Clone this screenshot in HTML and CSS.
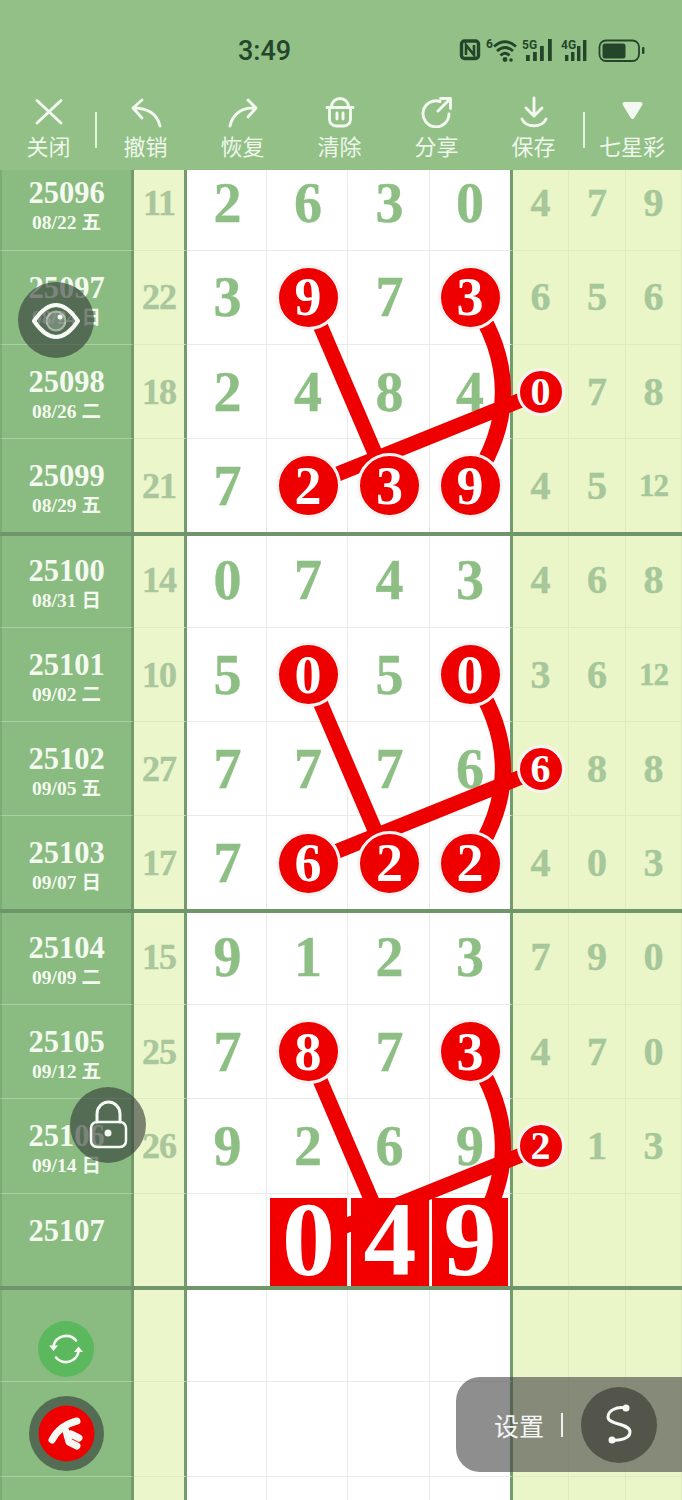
FILE: index.html
```html
<!DOCTYPE html>
<html lang="zh">
<head>
<meta charset="utf-8">
<title>七星彩</title>
<link rel="stylesheet" href="styles.css">
</head>
<body>
<div class="page">
  <header class="header">
    <div class="status">
      <span class="time">3:49</span>
      <svg class="status-icons" width="190" height="30" viewBox="0 0 190 30">
        <g class="ink-line">
          <rect x="3.5" y="6" width="17" height="17.5" rx="3" stroke-width="3.400"/>
          <path d="M8 20V10L16 20V10" stroke-width="2.600"/>
          <path d="M36 11.5Q47 2 58 11.5" stroke-width="2.800"/>
          <path d="M39 16Q47 9 55 16" stroke-width="2.800"/>
          <path d="M42.5 20.5Q47 16 51.5 20.5" stroke-width="2.800"/>
        </g>
        <g class="ink-fill">
          <circle cx="47" cy="24.5" r="2.400"/>
          <circle cx="53" cy="25" r="1.800"/>
          <text class="status-text" x="28" y="13">6</text>
          <text class="status-text" x="64" y="14">5G</text>
          <text class="status-text" x="103" y="14">4G</text>
          <rect x="68" y="20" width="3.800" height="6"/>
          <rect x="75" y="17" width="3.800" height="9"/>
          <rect x="82" y="11" width="3.800" height="15"/>
          <rect x="90" y="4" width="3.800" height="22"/>
          <rect x="107" y="20" width="3.400" height="6"/>
          <rect x="113" y="17" width="3.400" height="9"/>
          <rect x="119" y="11" width="3.400" height="15"/>
          <rect x="125" y="5" width="3.400" height="21"/>
          <rect x="144.5" y="8.5" width="23" height="15" rx="2.5"/>
          <rect x="184" y="12" width="2.4" height="7" rx="1"/>
        </g>
        <rect class="ink-line" x="141.5" y="5.5" width="39.5" height="20.5" rx="6.5" stroke-width="1.8"/>
      </svg>
    </div>
    <nav class="toolbar">
      <div class="tool sep">
        <svg class="icon" viewBox="0 0 32 32"><path d="M4 4.500L28 27M28 4.500L4 27"/></svg>
        <span class="label">关闭</span>
      </div>
      <div class="tool">
        <svg class="icon" viewBox="0 0 32 32"><path d="M12 4L3 12L12 22M3 12C16 12 27 17 30 30"/></svg>
        <span class="label">撤销</span>
      </div>
      <div class="tool">
        <svg class="icon" viewBox="0 0 32 32"><path d="M21 4L29 12L21 21M29 12C16 11 6 17 3 30"/></svg>
        <span class="label">恢复</span>
      </div>
      <div class="tool">
        <svg class="icon" viewBox="0 0 32 32"><path d="M7.500 10.500A8.500 8 0 0 1 24.500 10.500M3 11.500H29M5.500 11.500V23.500A6.500 6.500 0 0 0 12 30H20A6.500 6.500 0 0 0 26.500 23.500V11.500M13 17V23M19 17V23"/></svg>
        <span class="label">清除</span>
      </div>
      <div class="tool">
        <svg class="icon" viewBox="0 0 32 32"><path d="M19 5.500A13 13 0 1 0 28 18M17 15L29.500 2.500M19.500 2.500H29.500V12.500"/></svg>
        <span class="label">分享</span>
      </div>
      <div class="tool sep sep-out">
        <svg class="icon" viewBox="0 0 32 32"><path d="M16 2V19M8 12L16 20L24 12M4 23C8 32 24 32 28 23"/></svg>
        <span class="label">保存</span>
      </div>
      <div class="tool">
        <svg class="icon" viewBox="0 0 32 32"><path class="tri" d="M8.500 8H24.500L16.500 21Z"/></svg>
        <span class="label">七星彩</span>
      </div>
    </nav>
  </header>

  <main class="table">
    <div class="row">
      <div class="left"><b class="num">25096</b><span class="date">08/22 五</span></div>
      <div class="sum">11</div>
      <div class="main">2</div><div class="main">6</div><div class="main">3</div><div class="main end">0</div>
      <div class="side">4</div><div class="side">7</div><div class="side">9</div>
    </div>
    <div class="row">
      <div class="left"><b class="num">25097</b><span class="date">08/24 日</span></div>
      <div class="sum">22</div>
      <div class="main">3</div><div class="main"><span class="ball">9</span></div><div class="main">7</div><div class="main end"><span class="ball">3</span></div>
      <div class="side">6</div><div class="side">5</div><div class="side">6</div>
    </div>
    <div class="row">
      <div class="left"><b class="num">25098</b><span class="date">08/26 二</span></div>
      <div class="sum">18</div>
      <div class="main">2</div><div class="main">4</div><div class="main">8</div><div class="main end">4</div>
      <div class="side"><span class="ball small">0</span></div><div class="side">7</div><div class="side">8</div>
    </div>
    <div class="row heavy">
      <div class="left"><b class="num">25099</b><span class="date">08/29 五</span></div>
      <div class="sum">21</div>
      <div class="main">7</div><div class="main"><span class="ball">2</span></div><div class="main"><span class="ball">3</span></div><div class="main end"><span class="ball">9</span></div>
      <div class="side">4</div><div class="side">5</div><div class="side tiny">12</div>
    </div>
    <div class="row">
      <div class="left"><b class="num">25100</b><span class="date">08/31 日</span></div>
      <div class="sum">14</div>
      <div class="main">0</div><div class="main">7</div><div class="main">4</div><div class="main end">3</div>
      <div class="side">4</div><div class="side">6</div><div class="side">8</div>
    </div>
    <div class="row">
      <div class="left"><b class="num">25101</b><span class="date">09/02 二</span></div>
      <div class="sum">10</div>
      <div class="main">5</div><div class="main"><span class="ball">0</span></div><div class="main">5</div><div class="main end"><span class="ball">0</span></div>
      <div class="side">3</div><div class="side">6</div><div class="side tiny">12</div>
    </div>
    <div class="row">
      <div class="left"><b class="num">25102</b><span class="date">09/05 五</span></div>
      <div class="sum">27</div>
      <div class="main">7</div><div class="main">7</div><div class="main">7</div><div class="main end">6</div>
      <div class="side"><span class="ball small">6</span></div><div class="side">8</div><div class="side">8</div>
    </div>
    <div class="row heavy">
      <div class="left"><b class="num">25103</b><span class="date">09/07 日</span></div>
      <div class="sum">17</div>
      <div class="main">7</div><div class="main"><span class="ball">6</span></div><div class="main"><span class="ball">2</span></div><div class="main end"><span class="ball">2</span></div>
      <div class="side">4</div><div class="side">0</div><div class="side">3</div>
    </div>
    <div class="row">
      <div class="left"><b class="num">25104</b><span class="date">09/09 二</span></div>
      <div class="sum">15</div>
      <div class="main">9</div><div class="main">1</div><div class="main">2</div><div class="main end">3</div>
      <div class="side">7</div><div class="side">9</div><div class="side">0</div>
    </div>
    <div class="row">
      <div class="left"><b class="num">25105</b><span class="date">09/12 五</span></div>
      <div class="sum">25</div>
      <div class="main">7</div><div class="main"><span class="ball">8</span></div><div class="main">7</div><div class="main end"><span class="ball">3</span></div>
      <div class="side">4</div><div class="side">7</div><div class="side">0</div>
    </div>
    <div class="row">
      <div class="left"><b class="num">25106</b><span class="date">09/14 日</span></div>
      <div class="sum">26</div>
      <div class="main">9</div><div class="main">2</div><div class="main">6</div><div class="main end">9</div>
      <div class="side"><span class="ball small">2</span></div><div class="side">1</div><div class="side">3</div>
    </div>
    <div class="row heavy">
      <div class="left"><b class="num">25107</b></div>
      <div class="sum"></div>
      <div class="main"></div><div class="main has-box"><span class="box">0</span></div><div class="main has-box"><span class="box">4</span></div><div class="main end has-box"><span class="box last">9</span></div>
      <div class="side"></div><div class="side"></div><div class="side"></div>
    </div>
    <div class="row">
      <div class="left"></div><div class="sum"></div>
      <div class="main"></div><div class="main"></div><div class="main"></div><div class="main end"></div>
      <div class="side"></div><div class="side"></div><div class="side"></div>
    </div>
    <div class="row">
      <div class="left"></div><div class="sum"></div>
      <div class="main"></div><div class="main"></div><div class="main"></div><div class="main end"></div>
      <div class="side"></div><div class="side"></div><div class="side"></div>
    </div>
    <div class="row">
      <div class="left"></div><div class="sum"></div>
      <div class="main"></div><div class="main"></div><div class="main"></div><div class="main end"></div>
      <div class="side"></div><div class="side"></div><div class="side"></div>
    </div>
  </main>

  <svg class="links" width="682" height="1500" viewBox="0 0 682 1500">
    <g>
      <path d="M308 297L389 486"/>
      <path d="M308 486L541 392"/>
      <path class="arc" d="M470 297Q536 392 470 486"/>
    </g>
    <g transform="translate(0 377)">
      <path d="M308 297L389 486"/>
      <path d="M308 486L541 392"/>
      <path class="arc" d="M470 297Q536 392 470 486"/>
    </g>
    <g transform="translate(0 755)">
      <path d="M308 297L389 486"/>
      <path d="M308 486L541 392"/>
      <path class="arc" d="M470 297Q536 392 470 486"/>
    </g>
  </svg>

  <div class="float eye">
    <svg width="76" height="76" viewBox="0 0 76 76">
      <circle class="iris" cx="38" cy="39" r="9.500"/>
      <path class="fl" stroke-width="4" d="M16 39Q38 7 60 39Q38 71 16 39Z"/>
      <circle class="fw" cx="42" cy="35" r="2.500"/>
    </svg>
  </div>
  <div class="float lock">
    <svg width="76" height="76" viewBox="0 0 76 76">
      <rect class="fl" stroke-width="2.500" x="21" y="35" width="35" height="25" rx="6"/>
      <path class="fl" stroke-width="3" d="M27 35V27A11.500 12 0 0 1 50 27V35"/>
      <circle class="fw" cx="38" cy="46" r="3.500"/>
    </svg>
  </div>
  <div class="float sync">
    <svg width="56" height="56" viewBox="0 0 56 56">
      <path class="fl" stroke-width="2.600" d="M15.500 25A13 13 0 0 1 38 19.500M40.500 31A13 13 0 0 1 18 36.500"/>
      <path class="fw" d="M11 24.500H20L15.500 30ZM36 31H45L40.500 25.500Z"/>
    </svg>
  </div>
  <div class="float logo">
    <svg width="75" height="75" viewBox="0 0 75 75">
      <circle class="logo-red" cx="37.500" cy="37.500" r="28"/>
      <path class="fl" stroke-width="7" d="M23 44Q31 29 48 25"/>
      <path class="fl" stroke-width="7" d="M37 35L40 46L48 50M42 38L50 42"/>
    </svg>
  </div>
  <div class="float pill">
    <span class="pill-text">设置</span>
    <span class="pill-bar"></span>
    <span class="pill-btn">
      <svg width="76" height="76" viewBox="0 0 76 76">
        <path class="fl" stroke-width="3" d="M45 21C35 19 27 24 27 30C27 38 49 36 49 45C49 51 40 54 31 53"/>
        <circle class="fw" cx="45" cy="21" r="3.500"/>
        <circle class="fw" cx="31" cy="53" r="3.500"/>
      </svg>
    </span>
  </div>
</div>
</body>
</html>
```

FILE: styles.css
```css
* { box-sizing: border-box; }
html, body { margin: 0; padding: 0; }
.page {
  position: relative;
  width: 682px;
  height: 1500px;
  overflow: hidden;
  background: #fff;
  font-family: "Liberation Serif", "Noto Sans CJK SC", serif;
}

/* header */
.header {
  position: relative;
  z-index: 5;
  height: 170px;
  background: #92c087;
}
.status {
  display: flex;
  align-items: center;
  height: 96px;
  padding: 0 34px 0 238px;
}
.time {
  padding-top: 6px;
  font-family: Roboto, "Liberation Sans", sans-serif;
  font-size: 27px;
  font-weight: 500;
  color: #25452a;
}
.status-icons { margin-left: auto; margin-top: 4px; }
.ink-line { fill: none; stroke: #25452a; }
.ink-fill { fill: #25452a; }
.status-text {
  font-family: Roboto, "Liberation Sans", sans-serif;
  font-size: 12px;
  font-weight: 700;
}
.toolbar {
  display: grid;
  grid-template-columns: repeat(6, 97px) 100px;
}
.tool {
  position: relative;
  display: flex;
  flex-direction: column;
  align-items: center;
}
.sep::after {
  content: "";
  position: absolute;
  right: 0;
  top: 16px;
  width: 2px;
  height: 36px;
  background: #e4f2de;
}
.sep-out::after { right: -3px; }
.icon {
  width: 32px;
  height: 32px;
  margin-bottom: 4px;
  fill: none;
  stroke: #f3f9f0;
  stroke-width: 2.900;
  stroke-linecap: round;
  stroke-linejoin: round;
}
.icon .tri { fill: #f3f9f0; stroke-width: 4; }
.label {
  font-family: "Noto Sans CJK SC", sans-serif;
  font-size: 22px;
  line-height: 26px;
  color: #eef7ea;
}

/* table */
.table { margin-top: -13.600px; }
.row {
  position: relative;
  display: grid;
  grid-template-columns: 134px 53px 80px 81px 82px 83px 56px 57px 56px;
  height: 94.300px;
}
.heavy::after {
  content: "";
  position: absolute;
  left: 0;
  right: 0;
  bottom: -2px;
  height: 4px;
  background: #6f966a;
  z-index: 1;
}
.left {
  display: flex;
  flex-direction: column;
  align-items: center;
  padding-top: 21px;
  background: #8abb81;
  color: #f4faf0;
  border-left: 2px solid #7dab75;
  border-right: 3px solid #739c6e;
  border-bottom: 1px solid #a9d0a2;
}
.num { font-size: 30.500px; line-height: 32px; }
.date {
  margin-top: 3px;
  font-size: 19.500px;
  line-height: 22px;
  font-weight: 700;
}
.sum, .main, .side {
  display: flex;
  align-items: center;
  justify-content: center;
  font-weight: 700;
  line-height: 1;
  -webkit-text-stroke: 0.4px currentColor;
}
.sum {
  font-size: 36px;
  letter-spacing: -1px;
  color: #a9c69c;
  background: #ecf6cb;
  border-right: 3px solid #739c6e;
  border-bottom: 1px solid #dfe9c2;
}
.main {
  padding-left: 2px;
  font-size: 56px;
  color: #8dbf84;
  background: #fff;
  border-right: 1px solid #e8ebe8;
  border-bottom: 1px solid #e8ebe8;
}
.main.end { border-right: 3px solid #739c6e; padding-left: 0; }
.side {
  font-size: 40px;
  color: #a6c79a;
  background: #eaf5c8;
  border-right: 1px solid #dfeabf;
  border-bottom: 1px solid #dfeabf;
}
.side.tiny { font-size: 31px; letter-spacing: -1px; }

/* drawn numbers */
.ball {
  position: relative;
  z-index: 3;
  display: flex;
  flex: none;
  align-items: center;
  justify-content: center;
  width: 65px;
  height: 65px;
  border-radius: 50%;
  border: 3px solid #f7f3f3;
  background: #ee0000;
  color: #fff;
  font-size: 54px;
  -webkit-text-stroke: 0;
}
.ball.small { width: 48px; height: 48px; font-size: 40px; }
.main.has-box {
  align-items: flex-start;
  justify-content: flex-start;
  padding-left: 0;
}
.box {
  position: relative;
  z-index: 3;
  display: flex;
  flex: 1;
  align-items: center;
  justify-content: center;
  height: 88px;
  margin: 4px 0 0 3px;
  padding-bottom: 4px;
  background: #f20000;
  color: #fff;
  font-size: 106px;
  -webkit-text-stroke: 0;
}
.box.last { margin-left: 2px; margin-right: 2px; }
.links {
  position: absolute;
  left: 0;
  top: 0;
  z-index: 2;
  fill: none;
  stroke: #ee0000;
  stroke-width: 15px;
}
.links .arc { stroke-width: 16px; }

/* floating buttons */
.float {
  position: absolute;
  z-index: 4;
  border-radius: 50%;
  background: rgba(50, 60, 55, 0.62);
}
.fl { fill: none; stroke: #f6faf4; stroke-linecap: round; stroke-linejoin: round; }
.fw { fill: #f6faf4; }
.iris { fill: rgba(160, 175, 160, 0.45); stroke: rgba(235, 240, 235, 0.5); stroke-width: 2px; }
.eye { left: 18px; top: 282px; width: 76px; height: 76px; }
.lock { left: 70px; top: 1087px; width: 76px; height: 76px; }
.sync { left: 38px; top: 1321px; width: 56px; height: 56px; background: #5cb85c; }
.logo { left: 29px; top: 1396px; width: 75px; height: 75px; }
.logo-red { fill: #ee0000; }
.pill {
  left: 456px;
  top: 1377px;
  width: 226px;
  height: 95px;
  display: flex;
  align-items: center;
  padding-left: 38px;
  border-radius: 24px 0 0 24px;
  background: rgba(70, 70, 70, 0.61);
}
.pill-text {
  font-family: "Noto Sans CJK SC", sans-serif;
  font-size: 25px;
  color: #f5f5f5;
}
.pill-bar {
  width: 2px;
  height: 24px;
  margin-left: 17px;
  background: #f0f0f0;
}
.pill-btn {
  width: 76px;
  height: 76px;
  margin-left: 18px;
  border-radius: 50%;
  background: rgba(50, 50, 44, 0.6);
}
```
